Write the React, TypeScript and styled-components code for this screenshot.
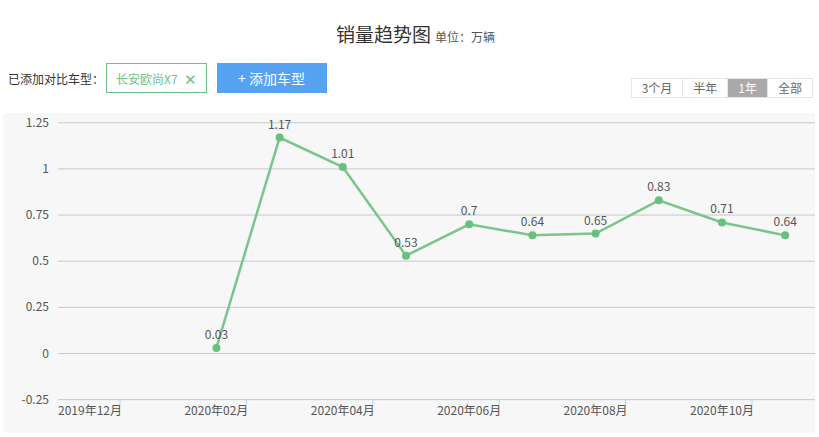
import React from 'react';
import styled, { createGlobalStyle } from 'styled-components';

const Global = createGlobalStyle`
  body { margin: 0; font-family: "Noto Sans CJK SC", "Liberation Sans", sans-serif; background: #fff; }
`;

const Page = styled.div`
  width: 819px;
  height: 437px;
  display: flex;
  flex-direction: column;
`;

const Header = styled.div`
  display: flex;
  justify-content: center;
  align-items: baseline;
  gap: 4px;
  padding-top: 20px;
  height: 43px;
  box-sizing: border-box;
  padding-left: 12px;
`;

const Title = styled.span`
  font-size: 19px;
  color: #333;
`;

const Unit = styled.span`
  font-size: 12px;
  color: #555;
`;

const Toolbar = styled.div`
  display: flex;
  align-items: center;
  height: 30px;
  margin-top: 20px;
  padding: 0 6px 0 8px;
`;

const Label = styled.span`
  font-size: 12px;
  color: #333;
`;

const Tag = styled.span`
  display: flex;
  align-items: center;
  gap: 6px;
  height: 30px;
  box-sizing: border-box;
  margin-left: 2px;
  padding: 0 9px;
  border: 1px solid #6cc386;
  color: #6cc386;
  font-size: 12px;
`;

const AddButton = styled.button`
  height: 30px;
  width: 110px;
  margin-left: 10px;
  border: none;
  background: #55a1f2;
  color: #fff;
  font-size: 14px;
  font-family: inherit;
`;

const Periods = styled.div`
  margin-left: auto;
  margin-top: 20px;
  display: flex;
  border: 1px solid #e5e5e5;
`;

const Period = styled.span<{ $active?: boolean }>`
  height: 18px;
  line-height: 18px;
  padding: 0 10px;
  font-size: 12px;
  color: ${p => (p.$active ? '#fff' : '#666')};
  background: ${p => (p.$active ? '#a9a9a9' : '#fff')};
  & + & { border-left: 1px solid #e5e5e5; }
`;

const ChartBox = styled.div`
  margin: 20px 4px 0 3px;
  height: 320px;
  background: #f7f7f7;
  border-radius: 4px;
`;

const data: [number, number][] = [
  [2, 0.03], [3, 1.17], [4, 1.01], [5, 0.53], [6, 0.7],
  [7, 0.64], [8, 0.65], [9, 0.83], [10, 0.71], [11, 0.64],
];
const yTicks = [1.25, 1, 0.75, 0.5, 0.25, 0, -0.25];
const xLabels = ['2019年12月', '2020年02月', '2020年04月', '2020年06月', '2020年08月', '2020年10月'];
const OFF = 113;
const X = (i: number) => 87 + 63.2 * i;
const Y = (v: number) => 353.5 - v * 184.6 - OFF;

function Chart() {
  const pts = data.map(([i, v]) => `${X(i)},${Y(v)}`).join(' ');
  return (
    <svg width="812" height="320" style={{ display: 'block', fontFamily: '"Noto Sans CJK SC", "Liberation Sans", sans-serif' }}>
      {yTicks.map(t => (
        <g key={t}>
          <line x1={55} x2={812} y1={Y(t)} y2={Y(t)} stroke={t === -0.25 ? '#b8cbe0' : '#c8c8c8'} />
          <text x={46} y={Y(t) + 4} textAnchor="end" fontSize={12} fill="#555">{t}</text>
        </g>
      ))}
      {[0, 1, 2, 3, 4, 5].map(k => (
        <g key={k}>
          <line x1={117 + 126.4 * k} x2={117 + 126.4 * k} y1={Y(-0.25)} y2={Y(-0.25) + 5} stroke="#b8cbe0" />
          <text x={X(2 * k)} y={Y(-0.25) + 15} textAnchor="middle" fontSize={12} fill="#555">{xLabels[k]}</text>
        </g>
      ))}
      <polyline points={pts} fill="none" stroke="#79c58d" strokeWidth={2.5} />
      {data.map(([i, v]) => (
        <g key={i}>
          <circle cx={X(i)} cy={Y(v)} r={4} fill="#66c07e" />
          <text x={X(i)} y={Y(v) - 9} textAnchor="middle" fontSize={12} fill="#555">{v}</text>
        </g>
      ))}
    </svg>
  );
}

export default function App() {
  return (
    <Page>
      <Global />
      <Header>
        <Title>销量趋势图</Title>
        <Unit>单位：万辆</Unit>
      </Header>
      <Toolbar>
        <Label>已添加对比车型：</Label>
        <Tag>长安欧尚X7 <span style={{ fontSize: 15 }}>✕</span></Tag>
        <AddButton>+ 添加车型</AddButton>
        <Periods>
          <Period>3个月</Period>
          <Period>半年</Period>
          <Period $active>1年</Period>
          <Period>全部</Period>
        </Periods>
      </Toolbar>
      <ChartBox>
        <Chart />
      </ChartBox>
    </Page>
  );
}
